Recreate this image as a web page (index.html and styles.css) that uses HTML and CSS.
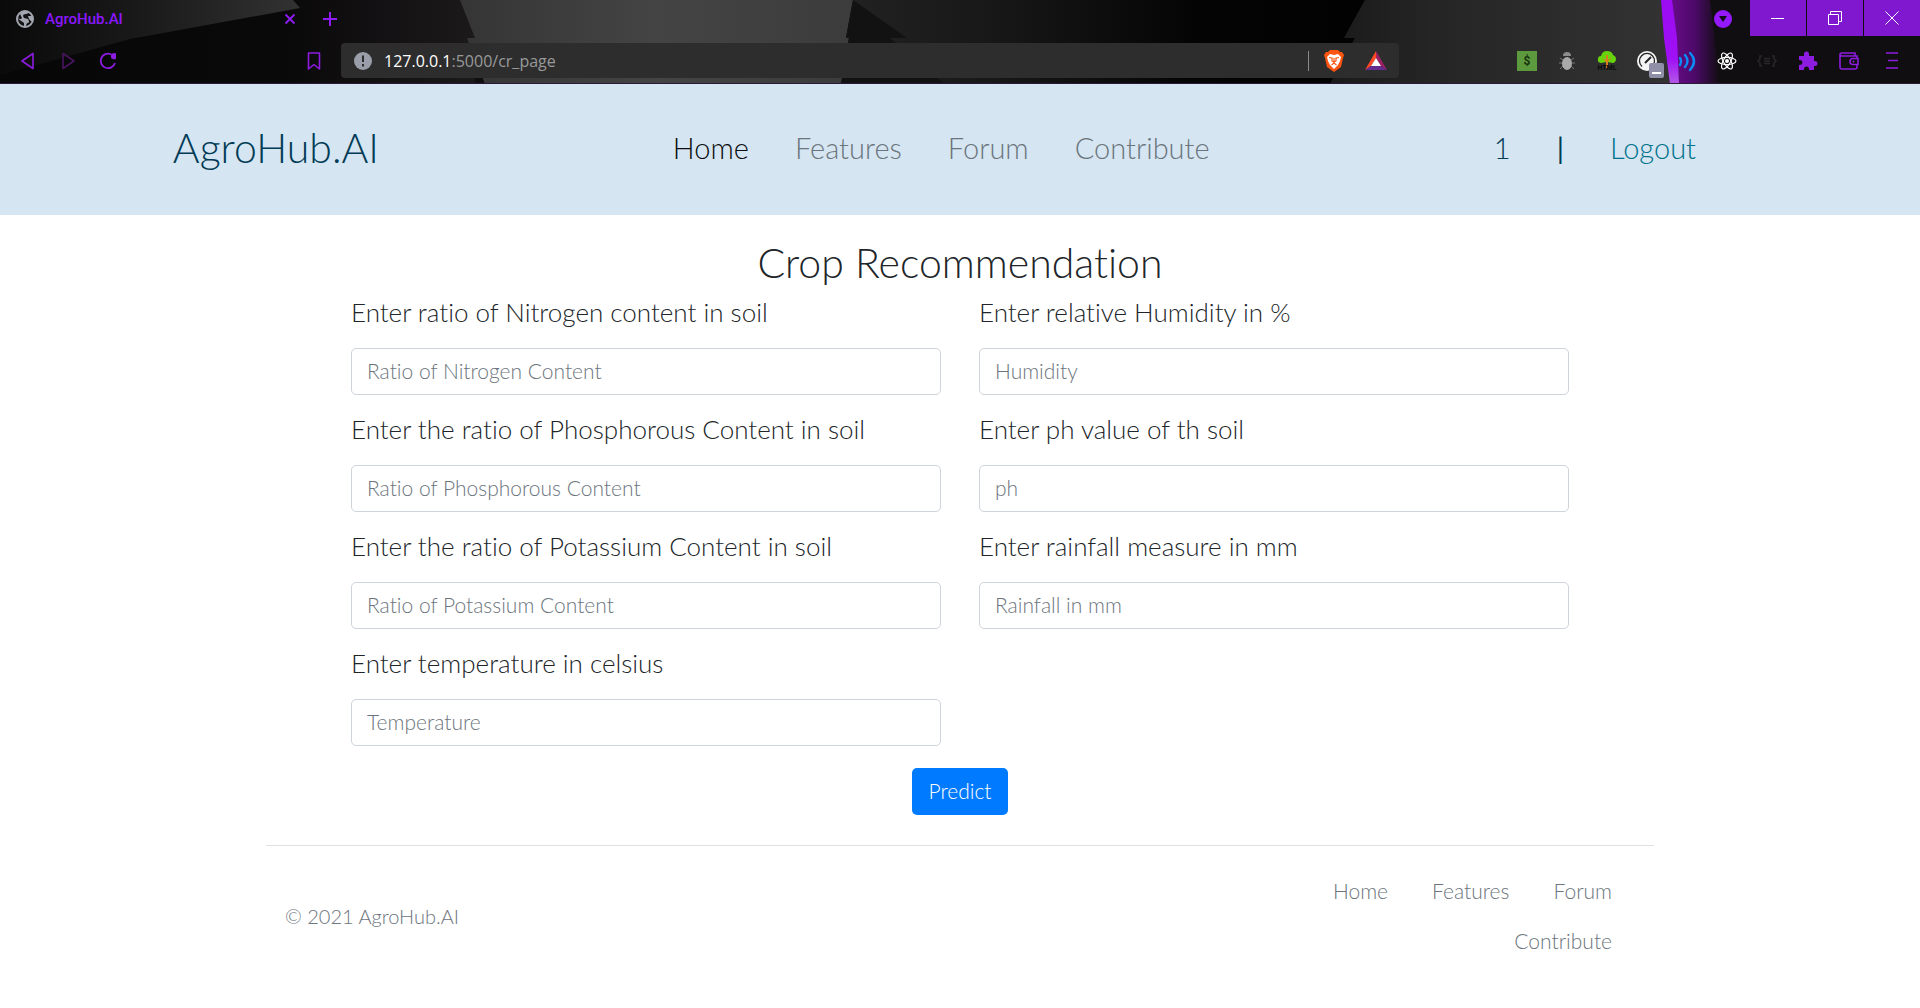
FILE: index.html
```html
<!DOCTYPE html>
<html lang="en">
<head>
<meta charset="utf-8">
<meta name="viewport" content="width=device-width, initial-scale=1">
<title>AgroHub.AI</title>
<link rel="stylesheet" href="styles.css">
</head>
<body>
<div class="browser">
  <svg class="theme" viewBox="0 0 1920 84" preserveAspectRatio="none" aria-hidden="true">
    <defs>
      <linearGradient id="wedge" x1="0" x2="1"><stop offset="0" stop-color="#0b0a0b"/><stop offset=".45" stop-color="#1a191a"/><stop offset="1" stop-color="#323232"/></linearGradient>
      <linearGradient id="night" x1="0" x2="1"><stop offset="0" stop-color="#080708"/><stop offset=".6" stop-color="#0a090a"/><stop offset="1" stop-color="#1c191b"/></linearGradient>
      <linearGradient id="slab" x1="0" x2="1"><stop offset="0" stop-color="#353535"/><stop offset=".5" stop-color="#444"/><stop offset="1" stop-color="#3c3c3c"/></linearGradient>
      <linearGradient id="fade" x1="0" x2="1"><stop offset="0" stop-color="#222"/><stop offset=".3" stop-color="#171717"/><stop offset=".68" stop-color="#050405"/><stop offset="1" stop-color="#030203"/></linearGradient>
      <linearGradient id="steel" x1="0" x2="1"><stop offset="0" stop-color="#1a1a1a"/><stop offset=".3" stop-color="#252525"/><stop offset="1" stop-color="#333"/></linearGradient>
      <linearGradient id="glow" x1="0" x2="1"><stop offset="0" stop-color="#6a0a8c"/><stop offset=".5" stop-color="#4c0a68"/><stop offset="1" stop-color="#100d10"/></linearGradient>
      <linearGradient id="beam" x1="0" y1="0" x2="0" y2="1"><stop offset="0" stop-color="#9a0cf2"/><stop offset=".7" stop-color="#a010f5"/><stop offset="1" stop-color="#b35ae8"/></linearGradient>
    </defs>
    <path fill="#100e10" d="M0 0h1920v84H0z"/>
    <path fill="url(#night)" d="M0 0h475v84H0z"/>
    <path fill="url(#wedge)" d="M0 0h293l7 8-170 31L0 75z"/>
    <path fill="url(#slab)" d="M460 0h393l-7 38h3l-8 46H485l-18-46h8z"/>
    <path fill="url(#fade)" d="M853 0h512l-21 38h11l-25 46H841l8-46h-3z"/>
    <path fill="#131213" d="M853 0l54 38h-61zM849 38h41l54 46H841z"/>
    <path fill="url(#steel)" d="M1365 0h300l12 84h-347l25-46h-11z"/>
    <path fill="url(#glow)" d="M1670 0h40l10 84h-42z"/>
    <path fill="url(#beam)" d="M1661 0h11l5 38 2 46h-9l-6-46z"/>
    <path fill="#2d1836" d="M0 83h1920v1H0z"/>
  </svg>

  <div class="tab-strip">
    <div class="tab">
      <svg class="i18" viewBox="0 0 18 18" aria-hidden="true"><circle cx="9" cy="9" r="8" fill="#141314" stroke="#a3a7b0" stroke-width="2"/><path fill="#a3a7b0" d="M6 1l6 0q1 3-2 3T7 6l1 2 4 1q2 3 0 4-2 0-2 4H8v-4L1 8q4 2 5 0L5 6 4 4zM12 6h5v6q-3-1-4-3z"/></svg>
      <span class="tab-title">AgroHub.AI</span>
      <button class="plain" type="button" aria-label="Close tab"><svg class="i12" viewBox="0 0 12 12"><path d="M1.500 1.500l9 9M10.500 1.500l-9 9" stroke="#8f1cf5" stroke-width="1.800"/></svg></button>
    </div>
    <button class="plain" type="button" aria-label="New tab"><svg class="i16" viewBox="0 0 16 16"><path d="M8 1v14M1 8h14" stroke="#8f1cf5" stroke-width="2"/></svg></button>
    <button class="plain tab-search" type="button" aria-label="Search tabs"><svg class="i18" viewBox="0 0 18 18"><circle cx="9" cy="9" r="9" fill="#9419fb"/><path d="M5 6h8l-4 6z" fill="#120d14"/></svg></button>
    <div class="window-buttons">
      <button type="button" aria-label="Minimize"><svg class="i14" viewBox="0 0 14 14"><path d="M0 7.500h13" stroke="#fff"/></svg></button>
      <button type="button" aria-label="Restore"><svg class="i14" viewBox="0 0 14 14"><path d="M.5 3.500h10v10H.5zM2.500 3V.5h11v10H11" fill="none" stroke="#fff"/></svg></button>
      <button type="button" aria-label="Close"><svg class="i14" viewBox="0 0 14 14"><path d="M.5.5l13 13M13.500.5L.5 13.500" stroke="#fff"/></svg></button>
    </div>
  </div>

  <div class="toolbar">
    <div class="nav-buttons">
      <button class="plain" type="button" aria-label="Back"><svg class="i18" viewBox="0 0 18 18"><path d="M14 1.500v15L3 9z" fill="none" stroke="#8d1be0" stroke-width="1.600" stroke-linejoin="round"/></svg></button>
      <button class="plain" type="button" aria-label="Forward"><svg class="i18" viewBox="0 0 18 18"><path d="M4 1.500v15L15 9z" fill="none" stroke="#48145f" stroke-width="1.600" stroke-linejoin="round"/></svg></button>
      <button class="plain" type="button" aria-label="Reload"><svg class="i18" viewBox="0 0 18 18"><path d="M12 2.200A7.300 7.300 0 1 0 16 11" fill="none" stroke="#8d1be0" stroke-width="1.800"/><path d="M12 2q5-2 5 0v5q-5 1-5-2z" fill="#8d1be0"/></svg></button>
    </div>
    <button class="plain" type="button" aria-label="Bookmark"><svg class="i18" viewBox="0 0 18 18"><path d="M3.500 1h11v16L9 12.500 3.500 17z" fill="none" stroke="#8d1be0" stroke-width="1.600" stroke-linejoin="round"/></svg></button>
    <div class="address">
      <svg class="i18" viewBox="0 0 18 18" aria-hidden="true"><circle cx="9" cy="9" r="9" fill="#9a9ea8"/><path d="M8 3.500h2V10H8zM8 12h2v2.500H8z" fill="#2d2d2d"/></svg>
      <span class="url"><span class="host">127.0.0.1</span>:5000/cr_page</span>
      <span class="divider"></span>
      <button class="plain" type="button" aria-label="Shields"><svg class="i22" viewBox="0 0 22 22"><path fill="#fb5410" d="M7 0h8l2 2h2l2 3-1 3-2 9-7 5-7-5L2 8 1 5l2-3h2z"/><path fill="#fff" d="M7 4l4 1 4-1 3 3-1 4-2 4-4 4-4-4-2-4-1-4z"/><path fill="none" stroke="#fb5410" stroke-width="1.200" d="M6 7.500l3 .5v3l2 1 2-1V8l3-.5M11 8v5M8.500 15l2.500-2 2.500 2"/></svg></button>
      <button class="plain" type="button" aria-label="Rewards"><svg class="i22" viewBox="0 0 22 22"><path fill="#ff4a24" d="M11 1v7l-5 8-6 4z"/><path fill="#9e1f63" d="M11 1l11 19-6-4-5-8z"/><path fill="#662d91" d="M0 20l6-4h10l6 4z"/><path fill="#fff" d="M11 8l5 8H6z"/></svg></button>
    </div>
    <div class="extensions">
      <button class="plain ext" type="button" aria-label="Prices"><svg class="i20" viewBox="0 0 20 20"><path fill="#5d9a3d" d="M0 0h20v20H0z"/><text x="10" y="14" text-anchor="middle" class="dollar">$</text></svg></button>
      <button class="plain ext" type="button" aria-label="Debugger"><svg class="i20" viewBox="0 0 20 20"><path stroke="#777" d="M3 7l3 2m11-2l-3 2M2 12h4m8 0h4M3 18l3-3m11 3l-3-3"/><path fill="#8c8c8c" d="M6 5q0-4 4-4t4 4z"/><ellipse cx="10" cy="12.500" rx="5" ry="6.500" fill="#a9a9a9"/></svg></button>
      <button class="plain ext" type="button" aria-label="HTML tree"><svg class="i20" viewBox="0 0 20 20"><path fill="#66d30c" d="M4 12q-4-1-3-4 0-3 3-3 1-5 6-5t6 4q3 1 3 4t-3 4l-6-1z"/><path fill="#d9801c" d="M9 17V11L5 7l4 2V4h2v5l4-3-4 5v6z"/><text x="10" y="19" text-anchor="middle" class="tree-label">HTML</text></svg></button>
      <button class="plain ext" type="button" aria-label="Page speed"><svg class="i20" viewBox="0 0 20 20"><circle cx="10" cy="10" r="10" fill="#f4f4f4"/><path d="M5 15.500a7.500 7.500 0 1 1 10 0" fill="none" stroke="#222" stroke-width="1.300"/><path stroke="#222" stroke-width="2" d="M8 12l6-6"/></svg><span class="badge"></span></button>
      <button class="plain ext" type="button" aria-label="Audio"><svg class="i20" viewBox="0 0 20 20"><path fill="none" stroke="#0a8cf5" stroke-width="2.400" stroke-linecap="round" d="M3 7q2 3 0 7M8 4q5 6 0 12M13 2q8 8 0 17"/></svg></button>
      <button class="plain ext" type="button" aria-label="React"><svg class="i20" viewBox="0 0 20 20"><g fill="none" stroke="#fff" stroke-width="1.200"><ellipse cx="10" cy="10" rx="9" ry="3.600"/><ellipse cx="10" cy="10" rx="9" ry="3.600" transform="rotate(60 10 10)"/><ellipse cx="10" cy="10" rx="9" ry="3.600" transform="rotate(120 10 10)"/></g><circle cx="10" cy="10" r="2" fill="#fff"/></svg></button>
      <button class="plain ext" type="button" aria-label="JSON"><svg class="i20" viewBox="0 0 20 20"><path fill="none" stroke="#292729" stroke-width="1.500" d="M5 5H3v3l-2 2 2 2v3h2M15 5h2v3l2 2-2 2v3h-2M7 7.500h6M7 10h6M7 12.500h6"/></svg></button>
      <button class="plain ext" type="button" aria-label="Extensions"><svg class="i20" viewBox="0 0 20 20"><path fill="#8d1be0" d="M2 5h5V3a2.500 2.500 0 0 1 5 0v2h5v5h1a2.500 2.500 0 0 1 0 5h-1v4h-5v-1a2.500 2.500 0 0 0-5 0v1H2v-5h1a2.500 2.500 0 0 0 0-5H2z"/></svg></button>
      <button class="plain ext" type="button" aria-label="Wallet"><svg class="i20" viewBox="0 0 20 20"><path fill="none" stroke="#8d1be0" stroke-width="1.600" d="M18 7V5H3Q1 5 1 3.500T3 2h13v3M1 4v12q0 2 2 2h13q2 0 2-2v-2M19 7.500v6h-5q-3 0-3-3t3-3z"/><circle cx="14.500" cy="10.500" r="1" fill="#8d1be0"/></svg></button>
      <button class="plain ext" type="button" aria-label="Menu"><svg class="i20" viewBox="0 0 20 20"><path stroke="#8d1be0" stroke-width="1.600" d="M4 2h12M6 9.500h10M4 17h12"/></svg></button>
    </div>
  </div>
</div>

<header class="site-header">
  <a class="brand" href="#">AgroHub.AI</a>
  <nav class="main-nav" aria-label="Main">
    <a class="active" href="#">Home</a>
    <a href="#">Features</a>
    <a href="#">Forum</a>
    <a href="#">Contribute</a>
  </nav>
  <div class="account">
    <a class="user" href="#">1</a>
    <span class="bar">|</span>
    <a href="#">Logout</a>
  </div>
</header>

<main>
  <form class="crop-form">
    <h1>Crop Recommendation</h1>
    <div class="columns">
      <div class="column">
        <div class="field"><label for="nitrogen">Enter ratio of Nitrogen content in soil</label><input id="nitrogen" type="text" placeholder="Ratio of Nitrogen Content"></div>
        <div class="field"><label for="phosphorous">Enter the ratio of Phosphorous Content in soil</label><input id="phosphorous" type="text" placeholder="Ratio of Phosphorous Content"></div>
        <div class="field"><label for="potassium">Enter the ratio of Potassium Content in soil</label><input id="potassium" type="text" placeholder="Ratio of Potassium Content"></div>
        <div class="field"><label for="temperature">Enter temperature in celsius</label><input id="temperature" type="text" placeholder="Temperature"></div>
      </div>
      <div class="column">
        <div class="field"><label for="humidity">Enter relative Humidity in %</label><input id="humidity" type="text" placeholder="Humidity"></div>
        <div class="field"><label for="ph">Enter ph value of th soil</label><input id="ph" type="text" placeholder="ph"></div>
        <div class="field"><label for="rainfall">Enter rainfall measure in mm</label><input id="rainfall" type="text" placeholder="Rainfall in mm"></div>
      </div>
    </div>
    <button class="predict" type="submit">Predict</button>
  </form>
</main>

<footer class="site-footer">
  <p>© 2021 AgroHub.AI</p>
  <nav class="footer-nav" aria-label="Footer">
    <a href="#">Home</a>
    <a href="#">Features</a>
    <a href="#">Forum</a>
    <a href="#">Contribute</a>
  </nav>
</footer>
</body>
</html>
```

FILE: styles.css
```css
*, *::before, *::after { box-sizing: border-box; }

body {
  margin: 0;
  background: #fff;
  color: #212529;
  font-family: Lato, "Open Sans", sans-serif;
  font-variant-ligatures: none;
  font-weight: 300;
  font-size: 20px;
  line-height: 30px;
}

a { color: inherit; text-decoration: none; }
button { font: inherit; cursor: pointer; }
svg { display: block; overflow: visible; }

/* Browser frame */
.browser { position: relative; height: 84px; color: #999; }
.theme { position: absolute; inset: 0; width: 100%; height: 100%; z-index: -1; }

.i12 { width: 12px; height: 12px; }
.i14 { width: 14px; height: 14px; }
.i16 { width: 16px; height: 16px; }
.i18 { width: 18px; height: 18px; }
.i20 { width: 20px; height: 20px; }
.i22 { width: 22px; height: 22px; }

.plain { display: block; padding: 0; border: 0; background: none; }

.tab-strip { display: flex; align-items: center; height: 38px; padding-left: 16px; }
.tab { display: flex; align-items: center; gap: 11px; width: 280px; margin-right: 26px; }
.tab-title {
  flex: 1;
  color: #8a17ff;
  font: 500 15px/20px Roboto, "Open Sans", sans-serif;
}
.tab-search { margin-left: auto; margin-right: 18px; }
.window-buttons { display: flex; align-self: flex-start; gap: 1px; }
.window-buttons button {
  display: grid;
  place-items: center;
  width: 56px;
  height: 36px;
  padding: 0;
  border: 0;
  background: #8018cf;
}

.toolbar { display: flex; align-items: center; height: 45px; padding: 0 18px 0 19px; }
.nav-buttons { display: flex; gap: 22px; margin-right: 188px; }
.address {
  display: flex;
  flex: 1;
  align-items: center;
  height: 35px;
  margin: 0 108px 0 18px;
  padding: 0 12px 0 13px;
  border-radius: 4px;
  background: #2d2d2d;
}
.url { margin-left: 12px; font: 400 16px/24px "Open Sans", sans-serif; }
.host { color: #fff; }
.divider { width: 1px; height: 20px; margin-left: auto; background: #8a8a8a; }
.address .plain { margin-left: 14px; }
.address .plain:last-child { margin-left: 20px; }
.extensions { display: flex; }
.ext { position: relative; display: grid; place-items: center; width: 40px; }
.ext:nth-last-child(-n+2) { width: 43px; }
.ext:last-child { margin-right: -11px; }
.dollar { fill: #16330c; font: 700 12px Roboto, sans-serif; }
.tree-label { fill: #0b0b0b; font: 700 7px Roboto, sans-serif; }
.badge {
  position: absolute;
  left: 22px;
  top: 12px;
  width: 15px;
  height: 15px;
  padding: 9px 3px 0;
  border-radius: 2px;
  background: #8f8fa8;
}
.badge::before { content: ""; display: block; border-top: 2px dashed #fff; }

/* Site header */
.site-header {
  display: grid;
  grid-template-columns: 26% auto 1fr;
  align-items: center;
  padding: 34px 224px 37px 9%;
  background: #d5e5f1;
  font-size: 29px;
}
.brand { color: #013b56; font-size: 41px; line-height: 60px; }
.main-nav { display: flex; gap: 46px; padding-left: 104px; color: #6b757d; }
.main-nav .active { color: #0b0d10; }
.account { display: flex; justify-content: flex-end; gap: 46px; color: #00728c; }
.user, .bar { color: #013b56; }
.bar { font-weight: 400; }

/* Crop form */
.crop-form { max-width: 1218px; margin: 0 auto; padding: 24px 0 30px; }
h1 {
  margin: 0 0 10px;
  font-size: 41px;
  font-weight: 300;
  line-height: 48px;
  text-align: center;
}
.columns { display: grid; grid-template-columns: 1fr 1fr; gap: 38px; }
.column { display: flex; flex-direction: column; gap: 19px; }
.field { display: flex; flex-direction: column; gap: 21px; }
.field label { font-size: 26px; line-height: 30px; }
.field input {
  width: 100%;
  height: 47px;
  padding: 0 15px 2px;
  border: 1px solid #ced4da;
  border-radius: 5px;
  background: #fff;
  color: #495057;
  font: inherit;
  font-size: 21px;
}
.field input::placeholder { color: #6c757d; opacity: 1; }
.predict {
  display: block;
  height: 47px;
  margin: 22px auto 0;
  padding: 0 16px 2px;
  border: 0;
  border-radius: 5px;
  background: #007bff;
  color: #fff;
  font-size: 21px;
}

/* Footer */
.site-footer {
  display: flex;
  align-items: center;
  justify-content: space-between;
  max-width: 1388px;
  margin: 0 auto;
  padding: 20px 42px 21px 19px;
  border-top: 1px solid #dee0e3;
  color: #6c757d;
}
.site-footer p { margin: 0; }
.footer-nav {
  display: flex;
  flex-wrap: wrap;
  justify-content: flex-end;
  column-gap: 44px;
  max-width: 320px;
  font-size: 21px;
  line-height: 50px;
}
```
